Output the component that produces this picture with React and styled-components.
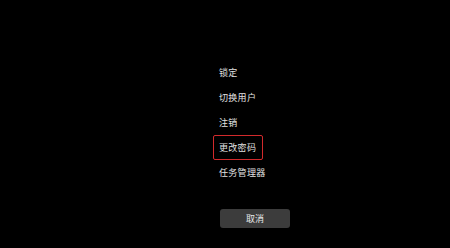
import styled, { createGlobalStyle } from "styled-components";

const GlobalStyle = createGlobalStyle`
  html, body {
    margin: 0;
    padding: 0;
    background: #000;
  }
  body {
    font-family: "Noto Sans CJK SC", "Noto Sans", sans-serif;
  }
`;

const Screen = styled.div`
  width: 450px;
  height: 248px;
  background: #000;
  display: flex;
  flex-direction: column;
  padding: 60px 0 0 213px;
  box-sizing: border-box;
`;

const Menu = styled.ul`
  list-style: none;
  margin: 0;
  padding: 0;
  display: flex;
  flex-direction: column;
  align-items: flex-start;
`;

const Item = styled.li`
  height: 25px;
  display: flex;
  align-items: center;
`;

const Label = styled.span`
  display: inline-flex;
  align-items: center;
  height: 25px;
  padding: 0 6px 0 5px;
  box-sizing: border-box;
  border: 1.5px solid ${(p) => (p.$active ? "#d22a2c" : "transparent")};
  border-radius: 2px;
  color: #e2e2e2;
  font-size: 9px;
  letter-spacing: 0.3px;
`;

const CancelButton = styled.button`
  margin: 24px 0 0 7px;
  width: 70px;
  height: 19px;
  border: none;
  border-radius: 3px;
  background: #3c3c3c;
  color: #e8e8e8;
  font-family: inherit;
  font-size: 9px;
  padding: 0;
`;

const items = ["锁定", "切换用户", "注销", "更改密码", "任务管理器"];

export default function App() {
  return (
    <>
      <GlobalStyle />
      <Screen>
        <Menu>
          {items.map((t) => (
            <Item key={t}>
              <Label $active={t === "更改密码"}>{t}</Label>
            </Item>
          ))}
        </Menu>
        <CancelButton>取消</CancelButton>
      </Screen>
    </>
  );
}
